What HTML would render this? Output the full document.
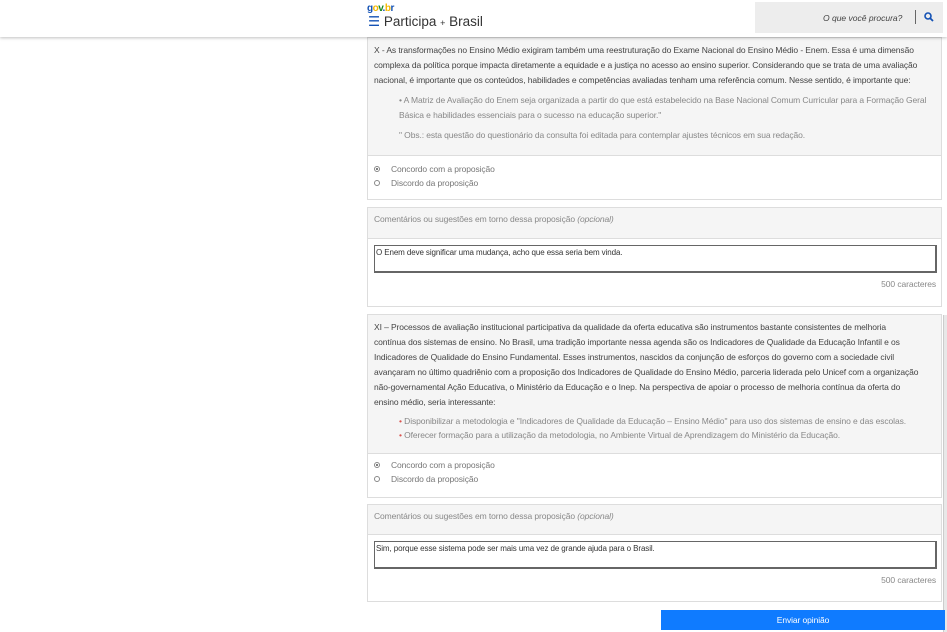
<!DOCTYPE html>
<html><head><meta charset="utf-8"><style>
*{box-sizing:border-box;margin:0;padding:0}
body{width:947px;height:632px;overflow:hidden;background:#fff;font-family:"Liberation Sans",sans-serif;color:#555;font-size:8.5px;letter-spacing:-0.1px;position:relative}
.hdr{position:absolute;left:0;top:0;width:947px;height:37px;background:#fff;box-shadow:0 1px 3px rgba(0,0,0,.25);z-index:2;letter-spacing:0}
.logo{position:absolute;left:367px;top:3px;font-weight:bold;font-size:10px;letter-spacing:-.5px}
.title{position:absolute;left:368px;top:14px;font-size:13.5px;color:#333}
.search{position:absolute;left:755px;top:2px;width:188px;height:31px;background:#ededed}
.search i{position:absolute;left:68px;top:11px;font-size:8.5px;color:#444}
.card{position:absolute;left:367px;width:575px;border:1px solid #ddd;background:#fff}
.gray{background:#f5f5f5;border-bottom:1px solid #ddd}
.q{padding:5px 6px 8px 6px;line-height:15px;color:#444}
.sub{padding-left:25px;color:#888}
.r{display:flex;align-items:center;height:14px;padding-left:6px;color:#777}
.r span{width:6px;height:6px;border:1px solid #888;border-radius:50%;margin-right:11px;display:inline-block;position:relative}
.r span.on:after{content:"";position:absolute;left:1px;top:1px;width:2px;height:2px;background:#555;border-radius:50%}
.ta{position:absolute;left:6px;width:563px;height:28px;border:1px solid #666;border-width:1px 2px 2px 1px;font-size:8px;color:#333;padding:2px 1px}
.cnt{position:absolute;right:5px;color:#888}
.btn{position:absolute;left:661px;top:610px;width:284px;height:20px;background:#0f7bff;color:#fff;text-align:center;line-height:20px;font-size:8.5px}
</style></head><body>
<div class="hdr">
<div class="logo"><span style="color:#1351b4">g</span><span style="color:#f5b800">o</span><span style="color:#168821">v</span><span style="color:#1351b4">.</span><span style="color:#f5b800">b</span><span style="color:#1351b4">r</span></div>
<div class="title"><span style="color:#1351b4">☰</span> Participa <span style="font-size:9px">+</span> Brasil</div>
<div class="search"><i>O que você procura?</i><div style="position:absolute;left:160px;top:8px;width:1px;height:14px;background:#666"></div><svg style="position:absolute;left:169px;top:10px" width="10" height="10" viewBox="0 0 10 10"><circle cx="4" cy="4" r="3" fill="none" stroke="#1351b4" stroke-width="1.6"/><path d="M6.2 6.2 9 9" stroke="#1351b4" stroke-width="1.8"/></svg></div>
</div>

<div class="card" style="top:37px;height:163px">
<div class="gray q" style="height:118px">
X - As transformações no Ensino Médio exigiram também uma reestruturação do Exame Nacional do Ensino Médio - Enem. Essa é uma dimensão complexa da política porque impacta diretamente a equidade e a justiça no acesso ao ensino superior. Considerando que se trata de uma avaliação nacional, é importante que os conteúdos, habilidades e competências avaliadas tenham uma referência comum. Nesse sentido, é importante que:
<div class="sub" style="margin-top:5px">• A Matriz de Avaliação do Enem seja organizada a partir do que está estabelecido na Base Nacional Comum Curricular para a Formação Geral Básica e habilidades essenciais para o sucesso na educação superior."</div>
<div class="sub" style="margin-top:5px">" Obs.: esta questão do questionário da consulta foi editada para contemplar ajustes técnicos em sua redação.</div>
</div>
<div style="padding-top:6px"><div class="r"><span class="on"></span>Concordo com a proposição</div><div class="r"><span></span>Discordo da proposição</div></div>
</div>

<div class="card" style="top:207px;height:100px">
<div class="gray" style="height:31px;padding:6px 6px;color:#888">Comentários ou sugestões em torno dessa proposição <i>(opcional)</i></div>
<div class="ta" style="top:37px">O Enem deve significar uma mudança, acho que essa seria bem vinda.</div>
<div class="cnt" style="top:71px">500 caracteres</div>
</div>

<div class="card" style="top:314px;height:184px">
<div class="gray q" style="height:139px;white-space:nowrap">
XI – Processos de avaliação institucional participativa da qualidade da oferta educativa são instrumentos bastante consistentes de melhoria<br>contínua dos sistemas de ensino. No Brasil, uma tradição importante nessa agenda são os Indicadores de Qualidade da Educação Infantil e os<br>Indicadores de Qualidade do Ensino Fundamental. Esses instrumentos, nascidos da conjunção de esforços do governo com a sociedade civil<br>avançaram no último quadriênio com a proposição dos Indicadores de Qualidade do Ensino Médio, parceria liderada pelo Unicef com a organização<br>não-governamental Ação Educativa, o Ministério da Educação e o Inep. Na perspectiva de apoiar o processo de melhoria contínua da oferta do<br>ensino médio, seria interessante:
<div class="sub" style="margin-top:4px;line-height:14px"><span style="color:#d9534f">•</span> Disponibilizar a metodologia e "Indicadores de Qualidade da Educação – Ensino Médio" para uso dos sistemas de ensino e das escolas.<br><span style="color:#d9534f">•</span> Oferecer formação para a utilização da metodologia, no Ambiente Virtual de Aprendizagem do Ministério da Educação.</div>
</div>
<div style="padding-top:4px"><div class="r"><span class="on"></span>Concordo com a proposição</div><div class="r"><span></span>Discordo da proposição</div></div>
</div>

<div class="card" style="top:504px;height:98px">
<div class="gray" style="height:30px;padding:6px 6px;color:#888">Comentários ou sugestões em torno dessa proposição <i>(opcional)</i></div>
<div class="ta" style="top:36px">Sim, porque esse sistema pode ser mais uma vez de grande ajuda para o Brasil.</div>
<div class="cnt" style="top:70px">500 caracteres</div>
</div>
<div style="position:absolute;left:943px;top:315px;width:4px;height:317px;background:#e8e8e8;border-left:1px solid #ccc"></div>
<div class="btn">Enviar opinião</div>
</body></html>
